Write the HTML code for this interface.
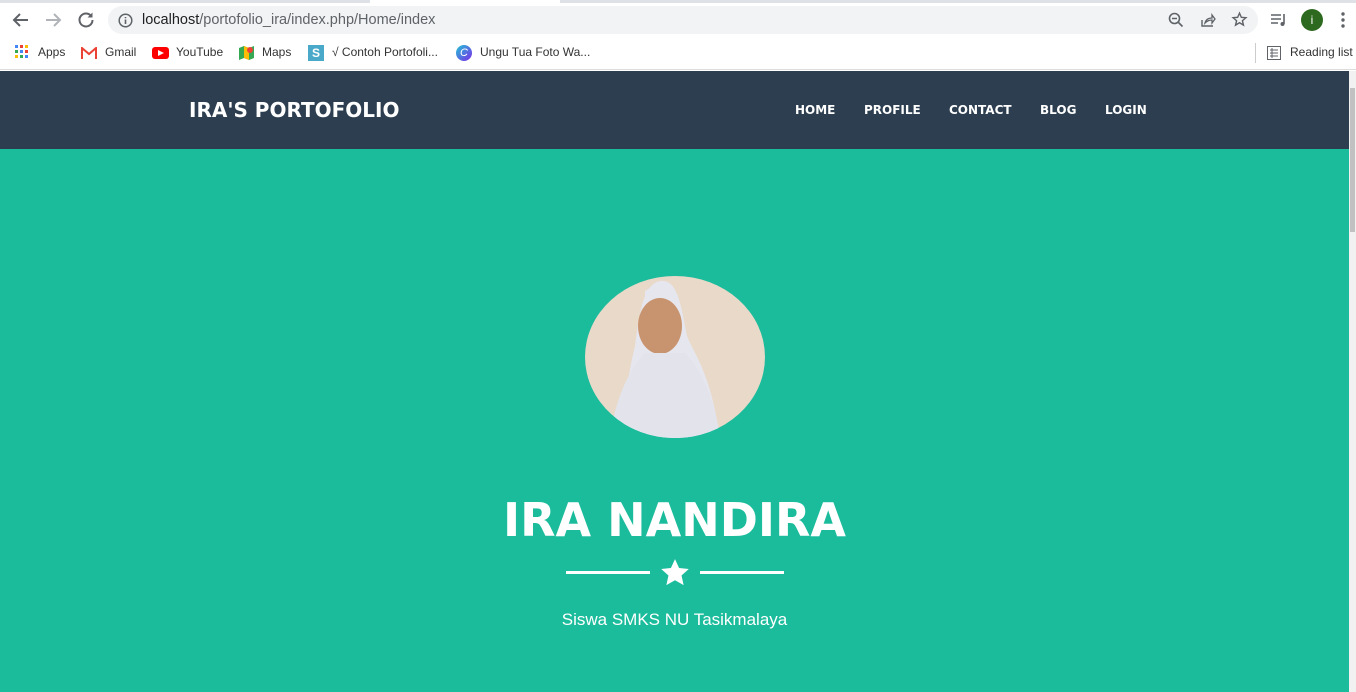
<!DOCTYPE html>
<html><head><meta charset="utf-8">
<style>
*{margin:0;padding:0;box-sizing:border-box}
body{width:1356px;height:692px;overflow:hidden;font-family:"Liberation Sans",Arial,sans-serif;background:#fff;position:relative}
.tabline{position:absolute;top:0;left:0;width:1356px;height:3px;background:#dee1e6}
.tabline i{position:absolute;left:370px;width:190px;height:3px;background:#fff}
.top{position:absolute;top:3px;left:0;width:1356px;height:34px}
.omni{position:absolute;left:108px;top:3px;width:1150px;height:28px;border-radius:14px;background:#f1f3f4}
.url{position:absolute;left:142px;top:9px;font-size:14.5px;color:#5f6368}
.url b{font-weight:normal;color:#202124}
.bm{position:absolute;top:37px;left:0;width:1356px;height:33px;font-size:12px;color:#333;border-bottom:1px solid #ddd}
.bm span{position:absolute;top:8px}
.nav{position:absolute;top:71px;left:0;width:1349px;height:78px;background:#2c3e50}
.brand{position:absolute;left:189px;top:27px;color:#fff;font-weight:bold;font-size:20px;font-family:"DejaVu Sans","Liberation Sans",sans-serif}
.menu{position:absolute;top:32px;color:#fff;font-weight:bold;font-size:12px;font-family:"DejaVu Sans",sans-serif}
.hero{position:absolute;top:149px;left:0;width:1349px;height:543px;background:#1abc9c}
.sb{position:absolute;left:1349px;top:71px;width:7px;height:621px;background:#f1f1f1}
.sb i{position:absolute;left:1px;top:17px;width:5px;height:144px;background:#c1c1c1}
h1{position:absolute;left:0;width:1349px;text-align:center;top:490px;line-height:60px;color:#fff;font-size:46px;font-family:"DejaVu Sans",sans-serif;font-weight:bold}
.line{position:absolute;top:571px;height:3px;width:84px;background:#fff}
.sub{position:absolute;left:0;width:1349px;text-align:center;top:610px;color:#fff;font-size:17px}
</style></head><body>
<div class="tabline"><i></i></div>
<div class="top">
<svg style="position:absolute;left:12px;top:8px" width="18" height="18" viewBox="0 0 18 18"><path d="M16 9H3M8 3L2 9l6 6" stroke="#5f6368" stroke-width="2" fill="none"/></svg>
<svg style="position:absolute;left:44px;top:8px" width="18" height="18" viewBox="0 0 18 18"><path d="M2 9h13M10 3l6 6-6 6" stroke="#b0b3b8" stroke-width="2" fill="none"/></svg>
<svg style="position:absolute;left:77px;top:8px" width="18" height="18" viewBox="0 0 18 18"><path d="M14.5 5.5A6.5 6.5 0 1 0 15.5 9" stroke="#5f6368" stroke-width="2" fill="none"/><path d="M15.5 1.5v5h-5z" fill="#5f6368"/></svg>
<div class="omni"></div>
<svg style="position:absolute;left:118px;top:10px" width="15" height="15" viewBox="0 0 15 15"><circle cx="7.5" cy="7.5" r="6.3" stroke="#5f6368" stroke-width="1.5" fill="none"/><path d="M7.5 6.5v4.5M7.5 4v1.3" stroke="#5f6368" stroke-width="1.6"/></svg>
<div class="url"><b>localhost</b>/portofolio_ira/index.php/Home/index</div>
<svg style="position:absolute;left:1168px;top:9px" width="16" height="16" viewBox="0 0 16 16"><circle cx="6.5" cy="6.5" r="5" stroke="#5f6368" stroke-width="1.6" fill="none"/><path d="M4 6.5h5M10.5 10.5l4 4" stroke="#5f6368" stroke-width="1.6"/></svg>
<svg style="position:absolute;left:1200px;top:9px" width="16" height="16" viewBox="0 0 16 16"><path d="M2 8v6h11" stroke="#5f6368" stroke-width="1.4" fill="none"/><path d="M5 11c1-4 4-5 7-5V3l3 4-3 4V8c-3 0-5 1-7 3z" stroke="#5f6368" stroke-width="1.3" fill="none"/></svg>
<svg style="position:absolute;left:1231px;top:8px" width="17" height="17" viewBox="0 0 24 24"><path d="M12 3l2.6 6 6.4.5-4.9 4.2 1.5 6.3L12 16.6 6.4 20l1.5-6.3L3 9.5 9.4 9z" stroke="#5f6368" stroke-width="2" fill="none"/></svg>
<svg style="position:absolute;left:1270px;top:9px" width="18" height="16" viewBox="0 0 18 16"><path d="M1 3h10M1 7h10M1 11h7" stroke="#5f6368" stroke-width="1.6"/><path d="M14 2v10" stroke="#5f6368" stroke-width="1.6"/><circle cx="12.5" cy="12" r="2" fill="#5f6368"/></svg>
<div style="position:absolute;left:1301px;top:6px;width:22px;height:22px;border-radius:50%;background:#2d6a1f;color:#fff;font-size:12px;text-align:center;line-height:22px">i</div>
<svg style="position:absolute;left:1340px;top:9px" width="6" height="16"><circle cx="3" cy="2" r="1.7" fill="#5f6368"/><circle cx="3" cy="8" r="1.7" fill="#5f6368"/><circle cx="3" cy="14" r="1.7" fill="#5f6368"/></svg>
</div>
<div class="bm">
<svg style="position:absolute;left:15px;top:8px" width="14" height="14"><g fill="#4285f4"><rect x="0" y="0" width="3" height="3"/><rect x="5" y="0" width="3" height="3" fill="#ea4335"/><rect x="10" y="0" width="3" height="3" fill="#fbbc05"/><rect x="0" y="5" width="3" height="3" fill="#34a853"/><rect x="5" y="5" width="3" height="3"/><rect x="10" y="5" width="3" height="3" fill="#ea4335"/><rect x="0" y="10" width="3" height="3" fill="#fbbc05"/><rect x="5" y="10" width="3" height="3" fill="#34a853"/><rect x="10" y="10" width="3" height="3"/></g></svg>
<span style="left:38px">Apps</span>
<svg style="position:absolute;left:81px;top:10px" width="16" height="12"><path d="M1 12V1l7 6 7-6v11" stroke="#ea4335" stroke-width="2" fill="none"/></svg>
<span style="left:105px">Gmail</span>
<div style="position:absolute;left:152px;top:10px;width:17px;height:12px;border-radius:3px;background:#f00"></div><svg style="position:absolute;left:158px;top:13px" width="6" height="6"><path d="M0 0l6 3-6 3z" fill="#fff"/></svg>
<span style="left:176px">YouTube</span>
<svg style="position:absolute;left:239px;top:8px" width="15" height="16"><path d="M0 3l5-2 5 2 5-2v12l-5 2-5-2-5 2z" fill="#34a853"/><path d="M5 1l5 2v12l-5-2z" fill="#fbbc05"/><circle cx="11" cy="5" r="3" fill="#ea4335"/></svg>
<span style="left:262px">Maps</span>
<div style="position:absolute;left:308px;top:8px;width:16px;height:16px;background:#4aa8c9;color:#fff;font-size:12px;font-weight:bold;text-align:center;line-height:16px">S</div>
<span style="left:332px">√ Contoh Portofoli...</span>
<div style="position:absolute;left:456px;top:8px;width:16px;height:16px;border-radius:50%;background:linear-gradient(135deg,#21c3d6,#7d2ae8);color:#fff;font-size:11px;font-style:italic;text-align:center;line-height:16px">C</div>
<span style="left:480px">Ungu Tua Foto Wa...</span>
<div style="position:absolute;left:1255px;top:6px;width:1px;height:20px;background:#ccc"></div>
<svg style="position:absolute;left:1267px;top:9px" width="14" height="14"><rect x="0.5" y="0.5" width="13" height="13" stroke="#5f6368" fill="none"/><path d="M3 4h8M3 7h8M3 10h8M5 2v10" stroke="#5f6368"/></svg>
<span style="left:1290px">Reading list</span>
</div>
<div class="nav">
<div class="brand">IRA'S PORTOFOLIO</div>
<div class="menu" style="left:795px">HOME</div>
<div class="menu" style="left:864px">PROFILE</div>
<div class="menu" style="left:949px">CONTACT</div>
<div class="menu" style="left:1040px">BLOG</div>
<div class="menu" style="left:1105px">LOGIN</div>
</div>
<div class="hero"></div>
<svg style="position:absolute;left:585px;top:276px" width="180" height="162" viewBox="0 0 180 162">
<defs><clipPath id="c"><ellipse cx="90" cy="81" rx="90" ry="81"/></clipPath></defs>
<g clip-path="url(#c)">
<rect width="180" height="162" fill="#e9d9c8"/>
<path d="M35 162C40 120 45 90 50 70 55 30 60 8 75 5 90 3 95 20 102 60 110 80 125 95 135 162z" fill="#e6e6ee"/>
<ellipse cx="75" cy="50" rx="22" ry="28" fill="#c8946f"/>
<path d="M60 20q15-12 30 0v-5q-15-10-30 0z" fill="#e6e6ee"/>
<path d="M25 162c5-40 20-70 35-85h40c15 15 30 45 35 85z" fill="#e3e3ec"/>
</g></svg>
<h1>IRA NANDIRA</h1>
<div class="line" style="left:566px"></div>
<div class="line" style="left:700px"></div>
<svg style="position:absolute;left:661px;top:559px" width="28" height="27" viewBox="0 0 24 23"><path d="M12 0l3.5 7.6 8.3.9-6.2 5.6 1.8 8.2L12 18.1 4.6 22.3l1.8-8.2L.2 8.5l8.3-.9z" fill="#fff"/></svg>
<div class="sub">Siswa SMKS NU Tasikmalaya</div>
<div class="sb"><i></i></div>
</body></html>
